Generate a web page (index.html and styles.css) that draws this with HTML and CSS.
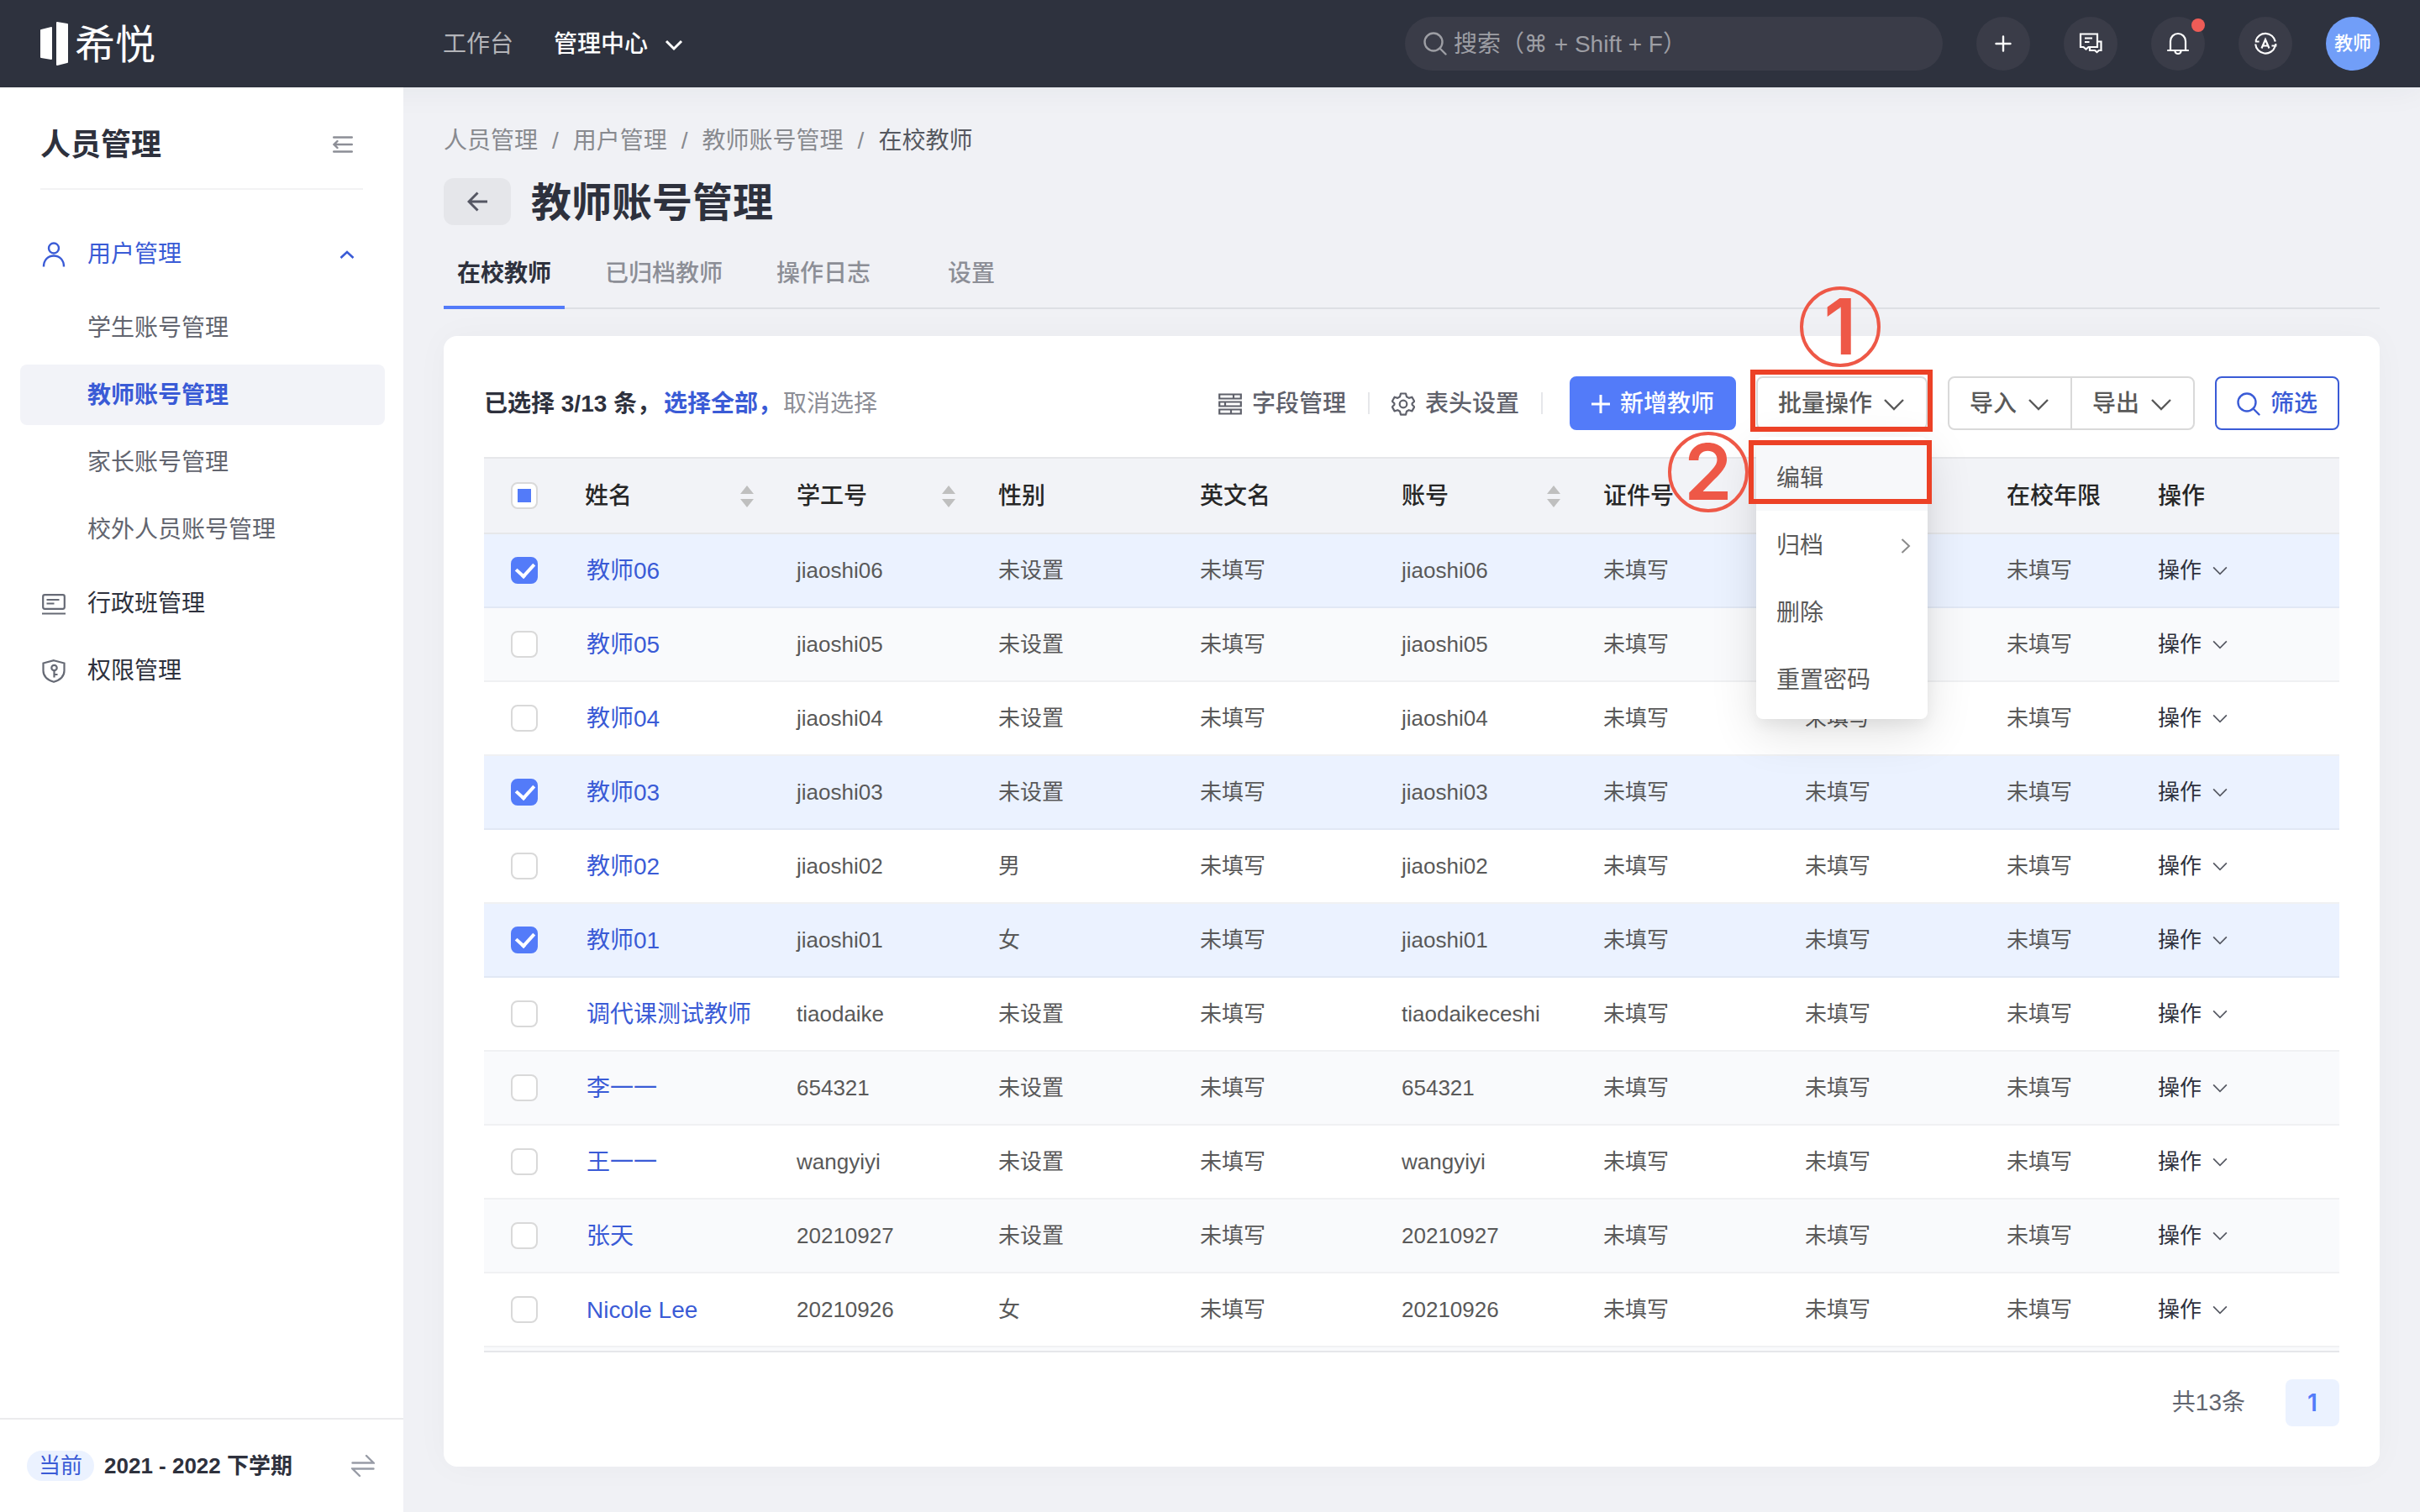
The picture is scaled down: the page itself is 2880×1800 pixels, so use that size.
FILE: index.html
```
<!DOCTYPE html>
<html lang="zh-CN">
<head>
  <meta charset="UTF-8">
  <meta name="viewport" content="width=device-width, initial-scale=1.0">
  <title>教师账号管理</title>
  <link rel="stylesheet" href="styles.css">
</head>
<body>

<!-- Shared icons -->
<svg class="sprite" aria-hidden="true">
  <symbol id="i-down" viewBox="0 0 28 28"><path d="M3 9l11 11L25 9" fill="none" stroke="currentColor" stroke-width="2.4"/></symbol>
  <symbol id="i-search" viewBox="0 0 28 28"><g fill="none" stroke="currentColor" stroke-width="2.4" stroke-linecap="round"><circle cx="12" cy="12" r="10.5"/><path d="M19.5 19.5l7 7"/></g></symbol>
</svg>

<header class="topbar">
  <a class="logo" href="#">
    <svg width="34" height="52" viewBox="0 0 34 52" fill="#fff"><path d="M1 9l12-3q1 0 1 1v37q0 1-1 1L1 43q-1 0-1-1V10q0-1 1-1zM20 0l12 2q1 0 1 1v45q0 1-1 1l-12 3q-1 0-1-1V1q0-1 1-1z"/></svg>
    <span>希悦</span>
  </a>
  <nav class="topnav">
    <a href="#">工作台</a>
    <a href="#" class="active">管理中心 <svg width="22" height="22" viewBox="0 0 22 22"><path d="M2 7l9 9 9-9" fill="none" stroke="currentColor" stroke-width="3"/></svg></a>
  </nav>
  <label class="search">
    <svg width="28" height="28"><use href="#i-search"/></svg>
    <input type="text" placeholder="搜索（⌘ + Shift + F）" aria-label="搜索">
  </label>
  <button class="round" aria-label="新建"><svg width="28" height="28" viewBox="0 0 28 28"><path d="M14 5.500v17M5.500 14h17" stroke="currentColor" stroke-width="2.400" stroke-linecap="round"/></svg></button>
  <button class="round" aria-label="消息"><svg width="28" height="28" viewBox="0 0 28 28" fill="none" stroke="currentColor" stroke-width="2.200"><path d="M2 2.500h20v15.500h-10.500l-3 2.500-3-2.500H2zM7 7.500h9M7 12h5.500"/><path d="M22 11.500h4.500v10.500h-2.500l-2.500 2-2.500-2h-6v-4"/></svg></button>
  <button class="round" aria-label="通知"><svg width="28" height="28" viewBox="0 0 28 28" fill="none" stroke="currentColor" stroke-width="2.200" stroke-linecap="round"><path d="M2 22h24M5 22V11a9 9 0 0 1 18 0v11M10.500 23a3.500 3 0 0 0 7 0"/></svg><i class="dot"></i></button>
  <button class="round" aria-label="翻译"><svg width="28" height="28" viewBox="0 0 28 28" fill="none" stroke="currentColor" stroke-width="2.200"><path d="M2.500 10.500A12 12 0 0 1 25.800 11.500M25.500 17.500A12 12 0 0 1 2.200 14.500M1.800 11.500h4.800M21.500 16.500h4.800v-2.500"/><path d="M9.500 19.500L14 9l4.500 10.500M11.200 16.500h5.600"/></svg></button>
  <button class="round avatar">教师</button>
</header>

<div class="layout">
  <aside class="sidebar">
    <div class="side-head">
      <h2>人员管理</h2>
      <button class="icon-btn" aria-label="收起"><svg width="24" height="24" viewBox="0 0 24 24" fill="none" stroke="currentColor" stroke-width="2.400" stroke-linecap="round"><path d="M1.200 3.500h21.600M2 12h20.800M1.200 20.500h21.600M5.500 8l-4 4 4 4"/></svg></button>
    </div>
    <ul class="menu">
      <li>
        <a href="#" class="open">
          <svg width="28" height="30" viewBox="0 0 28 30" fill="none" stroke="currentColor" stroke-width="2.400"><circle cx="14" cy="7.500" r="6"/><path d="M2 29.500c0-8 5-13 12-13s12 5 12 13"/></svg>
          用户管理
          <svg class="caret" width="18" height="12" viewBox="0 0 18 12"><path d="M1.500 10L9 3l7.500 7" fill="none" stroke="currentColor" stroke-width="2.600"/></svg>
        </a>
        <ul>
          <li><a href="#">学生账号管理</a></li>
          <li><a href="#" class="selected">教师账号管理</a></li>
          <li><a href="#">家长账号管理</a></li>
          <li><a href="#">校外人员账号管理</a></li>
        </ul>
      </li>
      <li><a href="#"><svg width="28" height="28" viewBox="0 0 28 28" fill="none" stroke="#666a75" stroke-width="2.200"><rect x="1.200" y="3.200" width="25.600" height="16.600" rx="2"/><path d="M0 25.500h28M5.500 9h15M5.500 13.500h9"/></svg>行政班管理</a></li>
      <li><a href="#"><svg width="28" height="28" viewBox="0 0 28 28" fill="none" stroke="#666a75" stroke-width="2.200"><path d="M14 1.200l12.500 3.300v9c0 6-4.500 10.800-12.500 13.300C6 24.300 1.500 19.500 1.500 13.500v-9z"/><circle cx="14.500" cy="10" r="3.200"/><path d="M14.500 13v8.500M14.500 18h4"/></svg>权限管理</a></li>
    </ul>
    <div class="side-foot">
      <span class="pill">当前</span>
      <strong>2021 - 2022 下学期</strong>
      <button class="icon-btn" aria-label="切换学期"><svg width="28" height="28" viewBox="0 0 28 28" fill="none" stroke="#989ca6" stroke-width="2.400" stroke-linecap="round"><path d="M1.500 10.500h25L18 2M26.500 17.500h-25L10 26"/></svg></button>
    </div>
  </aside>

  <main class="content">
    <nav class="breadcrumb">
      <a href="#">人员管理</a><i>/</i><a href="#">用户管理</a><i>/</i><a href="#">教师账号管理</a><i>/</i><span>在校教师</span>
    </nav>
    <div class="title">
      <button class="back" aria-label="返回"><svg width="24" height="24" viewBox="0 0 24 24" fill="none" stroke="currentColor" stroke-width="3"><path d="M1.500 12H24M12.500 1.500L2 12l10.500 10.500"/></svg></button>
      <h1>教师账号管理</h1>
    </div>
    <nav class="tabs">
      <a href="#" class="active">在校教师</a>
      <a href="#">已归档教师</a>
      <a href="#">操作日志</a>
      <a href="#">设置</a>
    </nav>

    <section class="card">
      <div class="toolbar">
        <p class="picked"><strong>已选择 3/13 条，</strong><a href="#"><strong>选择全部，</strong></a><a href="#" class="muted">取消选择</a></p>
        <button class="text-btn"><svg width="28" height="28" viewBox="0 0 28 28" fill="none" stroke="currentColor" stroke-width="2.200"><path d="M1.200 2.500h25.600v5H1.200zM1.200 11.500h25.600v5H1.200zM1.200 20.500h25.600v5H1.200zM18 2.500v5M8 11.500v5M15 20.500v5"/></svg>字段管理</button>
        <button class="text-btn"><svg width="28" height="28" viewBox="0 0 28 28" fill="none" stroke="currentColor" stroke-width="2.200" stroke-linejoin="round"><path d="M11 1.500h6l1 3.800 2.700 1.600 3.700-1.200 2.800 5-2.600 2.600v1.400l2.600 2.700-2.800 5-3.700-1.200-2.700 1.600-1 3.800h-6l-1-3.800-2.700-1.600-3.700 1.200-2.800-5 2.600-2.700v-1.400L.8 10.700l2.800-5 3.700 1.200L10 5.300z"/><circle cx="14" cy="14" r="4.300"/></svg>表头设置</button>
        <button class="btn primary"><svg width="22" height="22" viewBox="0 0 22 22"><path d="M11 0v22M0 11h22" stroke="currentColor" stroke-width="3"/></svg>新增教师</button>
        <div class="dropdown">
          <button class="btn">批量操作<svg width="28" height="28"><use href="#i-down"/></svg></button>
          <ul class="dropdown-menu">
            <li class="hover"><button>编辑</button></li>
            <li><button>归档<svg width="12" height="18" viewBox="0 0 12 18"><path d="M1.500 1l8.500 8-8.500 8" fill="none" stroke="#8a8a8a" stroke-width="2"/></svg></button></li>
            <li><button>删除</button></li>
            <li><button>重置密码</button></li>
          </ul>
          <!-- Step markers over the menu -->
          <span class="mark mark-1"></span>
          <span class="mark mark-2"></span>
          <span class="step step-1">1</span>
          <span class="step step-2">2</span>
        </div>
        <div class="btn-group">
          <button class="btn">导入<svg width="28" height="28"><use href="#i-down"/></svg></button>
          <button class="btn">导出<svg width="28" height="28"><use href="#i-down"/></svg></button>
        </div>
        <button class="btn outline"><svg width="28" height="28"><use href="#i-search"/></svg>筛选</button>
      </div>

      <table class="table">
        <colgroup>
          <col class="c-check"><col class="c-name"><col class="c-data"><col class="c-data"><col class="c-data"><col class="c-data"><col class="c-data"><col class="c-data"><col class="c-years"><col>
        </colgroup>
        <thead>
          <tr>
            <th><input type="checkbox" class="partial" aria-label="全选"></th>
            <th><div class="sort">姓名</div></th>
            <th><div class="sort">学工号</div></th>
            <th>性别</th>
            <th>英文名</th>
            <th><div class="sort">账号</div></th>
            <th>证件号</th>
            <th></th>
            <th>在校年限</th>
            <th>操作</th>
          </tr>
        </thead>
        <tbody>
          <tr class="on"><td><input type="checkbox" aria-label="教师06" checked></td><td><a href="#">教师06</a></td><td>jiaoshi06</td><td>未设置</td><td>未填写</td><td>jiaoshi06</td><td>未填写</td><td>未填写</td><td>未填写</td><td><button class="more">操作<svg width="20" height="20"><use href="#i-down"/></svg></button></td></tr>
          <tr><td><input type="checkbox" aria-label="教师05"></td><td><a href="#">教师05</a></td><td>jiaoshi05</td><td>未设置</td><td>未填写</td><td>jiaoshi05</td><td>未填写</td><td>未填写</td><td>未填写</td><td><button class="more">操作<svg width="20" height="20"><use href="#i-down"/></svg></button></td></tr>
          <tr><td><input type="checkbox" aria-label="教师04"></td><td><a href="#">教师04</a></td><td>jiaoshi04</td><td>未设置</td><td>未填写</td><td>jiaoshi04</td><td>未填写</td><td>未填写</td><td>未填写</td><td><button class="more">操作<svg width="20" height="20"><use href="#i-down"/></svg></button></td></tr>
          <tr class="on"><td><input type="checkbox" aria-label="教师03" checked></td><td><a href="#">教师03</a></td><td>jiaoshi03</td><td>未设置</td><td>未填写</td><td>jiaoshi03</td><td>未填写</td><td>未填写</td><td>未填写</td><td><button class="more">操作<svg width="20" height="20"><use href="#i-down"/></svg></button></td></tr>
          <tr><td><input type="checkbox" aria-label="教师02"></td><td><a href="#">教师02</a></td><td>jiaoshi02</td><td>男</td><td>未填写</td><td>jiaoshi02</td><td>未填写</td><td>未填写</td><td>未填写</td><td><button class="more">操作<svg width="20" height="20"><use href="#i-down"/></svg></button></td></tr>
          <tr class="on"><td><input type="checkbox" aria-label="教师01" checked></td><td><a href="#">教师01</a></td><td>jiaoshi01</td><td>女</td><td>未填写</td><td>jiaoshi01</td><td>未填写</td><td>未填写</td><td>未填写</td><td><button class="more">操作<svg width="20" height="20"><use href="#i-down"/></svg></button></td></tr>
          <tr><td><input type="checkbox" aria-label="调代课测试教师"></td><td><a href="#">调代课测试教师</a></td><td>tiaodaike</td><td>未设置</td><td>未填写</td><td>tiaodaikeceshi</td><td>未填写</td><td>未填写</td><td>未填写</td><td><button class="more">操作<svg width="20" height="20"><use href="#i-down"/></svg></button></td></tr>
          <tr><td><input type="checkbox" aria-label="李一一"></td><td><a href="#">李一一</a></td><td>654321</td><td>未设置</td><td>未填写</td><td>654321</td><td>未填写</td><td>未填写</td><td>未填写</td><td><button class="more">操作<svg width="20" height="20"><use href="#i-down"/></svg></button></td></tr>
          <tr><td><input type="checkbox" aria-label="王一一"></td><td><a href="#">王一一</a></td><td>wangyiyi</td><td>未设置</td><td>未填写</td><td>wangyiyi</td><td>未填写</td><td>未填写</td><td>未填写</td><td><button class="more">操作<svg width="20" height="20"><use href="#i-down"/></svg></button></td></tr>
          <tr><td><input type="checkbox" aria-label="张天"></td><td><a href="#">张天</a></td><td>20210927</td><td>未设置</td><td>未填写</td><td>20210927</td><td>未填写</td><td>未填写</td><td>未填写</td><td><button class="more">操作<svg width="20" height="20"><use href="#i-down"/></svg></button></td></tr>
          <tr><td><input type="checkbox" aria-label="Nicole Lee"></td><td><a href="#">Nicole Lee</a></td><td>20210926</td><td>女</td><td>未填写</td><td>20210926</td><td>未填写</td><td>未填写</td><td>未填写</td><td><button class="more">操作<svg width="20" height="20"><use href="#i-down"/></svg></button></td></tr>
        </tbody>
      </table>
      <div class="table-end"></div>

      <div class="pager">
        <span>共13条</span>
        <button>1</button>
      </div>
    </section>
  </main>
</div>
</body>
</html>
```
FILE: styles.css
```
:root {
  --primary: #537bf9;
  --link: #3a5bd6;
  --dark: #2e313d;
  --text: #595959;
  --muted: #8c8e96;
  --line: #e6e7ea;
}

* {
  box-sizing: border-box;
}

body {
  margin: 0;
  min-height: 100vh;
  display: flex;
  flex-direction: column;
  background: #f0f1f5;
  color: var(--dark);
  font-family: "Liberation Sans", "Noto Sans CJK SC", sans-serif;
  font-size: 28px;
  line-height: 40px;
}

h1, h2, p, ul {
  margin: 0;
  padding: 0;
}

ul {
  list-style: none;
}

a {
  color: inherit;
  text-decoration: none;
}

i {
  font-style: normal;
}

button, input {
  font: inherit;
  color: inherit;
}

button {
  padding: 0;
  border: none;
  background: none;
  cursor: pointer;
}

svg {
  flex: none;
}

.sprite {
  position: absolute;
  width: 0;
  height: 0;
}

/* Top bar */
.topbar {
  display: flex;
  align-items: center;
  gap: 40px;
  height: 104px;
  padding-right: 48px;
  background: #2e323e;
  color: #fff;
  box-shadow: 0 0 40px rgba(40, 44, 60, 0.06);
}

.logo {
  display: flex;
  align-items: center;
  gap: 7px;
  width: 487px;
  padding-left: 48px;
  font-size: 48px;
}

.logo span {
  padding-top: 4px;
}

.topnav {
  display: flex;
  flex: 1;
  gap: 48px;
  padding-top: 2px;
  color: #b3b4b9;
}

.topnav a {
  display: flex;
  align-items: center;
  gap: 20px;
}

.topnav .active {
  color: #fff;
  font-weight: 500;
}

.search {
  display: flex;
  align-items: center;
  gap: 8px;
  width: 640px;
  height: 64px;
  padding: 0 22px;
  border-radius: 32px;
  background: #3a3c48;
  color: #9d9ea4;
}

.search input {
  flex: 1;
  min-width: 0;
  padding: 2px 0 0;
  border: none;
  outline: none;
  background: none;
  font-family: "Liberation Sans", "DejaVu Sans", "Noto Sans CJK SC", sans-serif;
}

.search input::placeholder {
  color: #9d9ea4;
}

.round {
  position: relative;
  display: flex;
  align-items: center;
  justify-content: center;
  width: 64px;
  height: 64px;
  border-radius: 50%;
  background: #3a3c48;
}

.round .dot {
  position: absolute;
  top: 2px;
  right: 0;
  width: 16px;
  height: 16px;
  border-radius: 50%;
  background: #ee5c57;
}

.round.avatar {
  background: #719ef8;
  font-size: 22px;
  font-weight: 500;
}

.layout {
  display: flex;
  flex: 1;
}

/* Sidebar */
.sidebar {
  position: relative;
  display: flex;
  flex-direction: column;
  width: 480px;
  background: #fff;
}

.side-head {
  display: flex;
  align-items: center;
  justify-content: space-between;
  height: 122px;
  margin: 0 48px 40px;
  padding: 16px 12px 0 0;
  border-bottom: 2px solid #f2f2f4;
}

.side-head h2 {
  padding-top: 2px;
  font-size: 36px;
  font-weight: 600;
}

.icon-btn {
  display: flex;
  color: var(--muted);
}

.menu {
  flex: 1;
  padding: 0 22px 0 24px;
}

.menu li {
  margin-bottom: 8px;
}

.menu a {
  display: flex;
  align-items: center;
  gap: 26px;
  height: 72px;
  padding: 2px 26px 0;
  border-radius: 8px;
}

.menu .open {
  color: var(--link);
}

.menu .caret {
  margin: 0 10px 0 auto;
}

.menu ul {
  display: flow-root;
  padding-top: 16px;
}

.menu ul a {
  padding-left: 80px;
  color: #62656f;
}

.menu ul .selected {
  background: #f2f3f8;
  color: var(--link);
  font-weight: 600;
}

.side-foot {
  display: flex;
  align-items: center;
  gap: 12px;
  height: 112px;
  padding: 0 34px 0 32px;
  border-top: 2px solid #ebebed;
  font-size: 26px;
}

.side-foot strong {
  flex: 1;
}

.side-foot .pill {
  width: 80px;
  border-radius: 18px;
  background: #ebf2ff;
  color: var(--link);
  line-height: 36px;
  text-align: center;
}

/* Page head */
.content {
  flex: 1;
  min-width: 0;
  padding: 44px 48px 54px;
}

.breadcrumb {
  display: flex;
  gap: 17px;
  color: #888a8f;
}

.breadcrumb span {
  color: #55585f;
}

.title {
  display: flex;
  align-items: center;
  gap: 24px;
  margin: 24px 0 28px;
  height: 56px;
}

.title h1 {
  padding-top: 4px;
  font-size: 48px;
  font-weight: 600;
}

.back {
  display: flex;
  align-items: center;
  justify-content: center;
  width: 80px;
  height: 56px;
  border-radius: 12px;
  background: #e5e6ea;
  color: #555763;
}

.tabs {
  display: flex;
  gap: 32px;
  margin-bottom: 32px;
  height: 72px;
  box-shadow: inset 0 -2px #dddfe4;
}

.tabs a {
  min-width: 144px;
  padding: 10px 16px 0;
  color: var(--muted);
  font-weight: 500;
  text-align: center;
}

.tabs .active {
  border-bottom: 4px solid var(--primary);
  color: var(--dark);
  font-weight: 600;
}

/* Card */
.card {
  padding: 48px;
  border-radius: 16px;
  background: #fff;
  box-shadow: 0 0 40px rgba(40, 44, 60, 0.03);
}

.toolbar {
  display: flex;
  align-items: center;
  height: 64px;
  margin-bottom: 32px;
}

.picked {
  display: flex;
  flex: 1;
  padding-top: 2px;
  color: var(--link);
}

.picked > strong {
  margin-right: 4px;
  color: var(--dark);
}

.picked strong {
  font-weight: 600;
}

.picked .muted {
  margin-left: 2px;
  color: var(--muted);
}

.text-btn {
  display: flex;
  align-items: center;
  gap: 12px;
  height: 26px;
  padding: 2px 26px 0;
  border-right: 2px solid var(--line);
  color: #5f616b;
  font-weight: 500;
}

.btn {
  display: flex;
  align-items: center;
  gap: 12px;
  height: 64px;
  padding: 2px 24px 0;
  border: 2px solid #d9d9d9;
  border-radius: 8px;
  background: #fff;
  color: var(--text);
  font-weight: 500;
}

.btn.primary {
  margin-left: 32px;
  border-color: var(--primary);
  background: var(--primary);
  color: #fff;
}

.btn.outline {
  border-color: var(--link);
  color: var(--link);
}

.btn-group {
  display: flex;
  margin-right: 24px;
}

.btn-group .btn:first-child {
  border-radius: 8px 0 0 8px;
}

.btn-group .btn:last-child {
  margin-left: -2px;
  border-radius: 0 8px 8px 0;
}

/* Batch menu */
.dropdown {
  position: relative;
  margin: 0 24px;
}

.dropdown-menu {
  position: absolute;
  z-index: 2;
  top: 72px;
  left: 0;
  width: 100%;
  padding: 8px 0;
  border-radius: 8px;
  background: #fff;
  box-shadow: 0 16px 56px rgba(0, 0, 0, 0.12), 0 8px 16px rgba(0, 0, 0, 0.05);
  color: var(--text);
}

.dropdown-menu button {
  display: flex;
  align-items: center;
  justify-content: space-between;
  width: 100%;
  height: 80px;
  padding: 4px 20px 0 24px;
}

.dropdown-menu .hover {
  background: #f7f8fa;
}

.mark {
  position: absolute;
  z-index: 3;
  border: 6px solid #ec4126;
}

.mark-1 {
  top: -8px;
  left: -7px;
  width: 217px;
  height: 74px;
}

.mark-2 {
  top: 76px;
  left: -9px;
  width: 218px;
  height: 76px;
}

.step {
  position: absolute;
  z-index: 3;
  width: 96px;
  height: 96px;
  border: 4px solid #ee5847;
  border-radius: 50%;
  color: #ee5847;
  font-family: Inter, "Liberation Sans", sans-serif;
  font-size: 92px;
  font-weight: 600;
  line-height: 88px;
  text-align: center;
}

.step-1 {
  top: -107px;
  left: 52px;
}

.step-2 {
  top: 66px;
  left: -105px;
}

/* Table */
.table {
  width: 100%;
  border-spacing: 0;
  table-layout: fixed;
}

.c-check {
  width: 96px;
}

.c-name {
  width: 252px;
}

.c-data {
  width: 240px;
}

.c-years {
  width: 180px;
}

.table th,
.table td {
  height: 88px;
  padding: 0 24px;
  border-bottom: 2px solid #f0f1f3;
  text-align: left;
  white-space: nowrap;
}

.table th {
  height: 92px;
  padding-top: 2px;
  border-top: 2px solid var(--line);
  border-bottom-color: var(--line);
  background: #f2f3f7;
  color: #262626;
  font-weight: 500;
}

.table td {
  color: var(--text);
  font-size: 26px;
}

.table tr > :first-child {
  padding: 0 32px;
}

.table tbody tr:nth-child(even) {
  background: #f9fafc;
}

.table tbody tr.on {
  background: #ebf2ff;
}

.table .on td {
  border-color: #e1e8f5;
}

.table td a {
  display: block;
  padding: 2px 0 0 2px;
  color: var(--link);
  font-size: 28px;
}

.table input {
  appearance: none;
  display: block;
  width: 32px;
  height: 32px;
  margin: 0;
  border: 2px solid #d9d9d9;
  border-radius: 8px;
  background: #fff;
}

.table input:checked {
  border-color: var(--primary);
  background: var(--primary);
}

.table input:checked::after {
  content: "";
  display: block;
  width: 10px;
  height: 17px;
  margin: 3px 0 0 9px;
  border: solid #fff;
  border-width: 0 4px 4px 0;
  transform: translate(-1px, -2px) rotate(42deg);
}

.table input.partial::after {
  content: "";
  display: block;
  width: 16px;
  height: 16px;
  margin: 6px;
  background: var(--primary);
}

.sort {
  display: flex;
  align-items: center;
  justify-content: space-between;
}

/* Up and down arrows */
.sort::after {
  content: "";
  width: 16px;
  height: 26px;
  margin-right: 3px;
  background: #bfbfbf;
  clip-path: polygon(50% 0, 100% 38%, 0 38%, 0 62%, 100% 62%, 50% 100%, 0 62%, 0 38%);
}

.more {
  display: flex;
  align-items: center;
  gap: 12px;
  color: var(--dark);
}

.more svg {
  color: #555862;
}

.table-end {
  height: 6px;
  border-bottom: 2px solid var(--line);
  background: #f9fafc;
}

.pager {
  display: flex;
  align-items: center;
  justify-content: flex-end;
  gap: 48px;
  margin-top: 32px;
  color: #62656f;
}

.pager button {
  width: 64px;
  height: 56px;
  border-radius: 8px;
  background: #ebf2ff;
  color: var(--primary);
  font-family: Inter, "Liberation Sans", sans-serif;
  font-weight: 600;
}
```
